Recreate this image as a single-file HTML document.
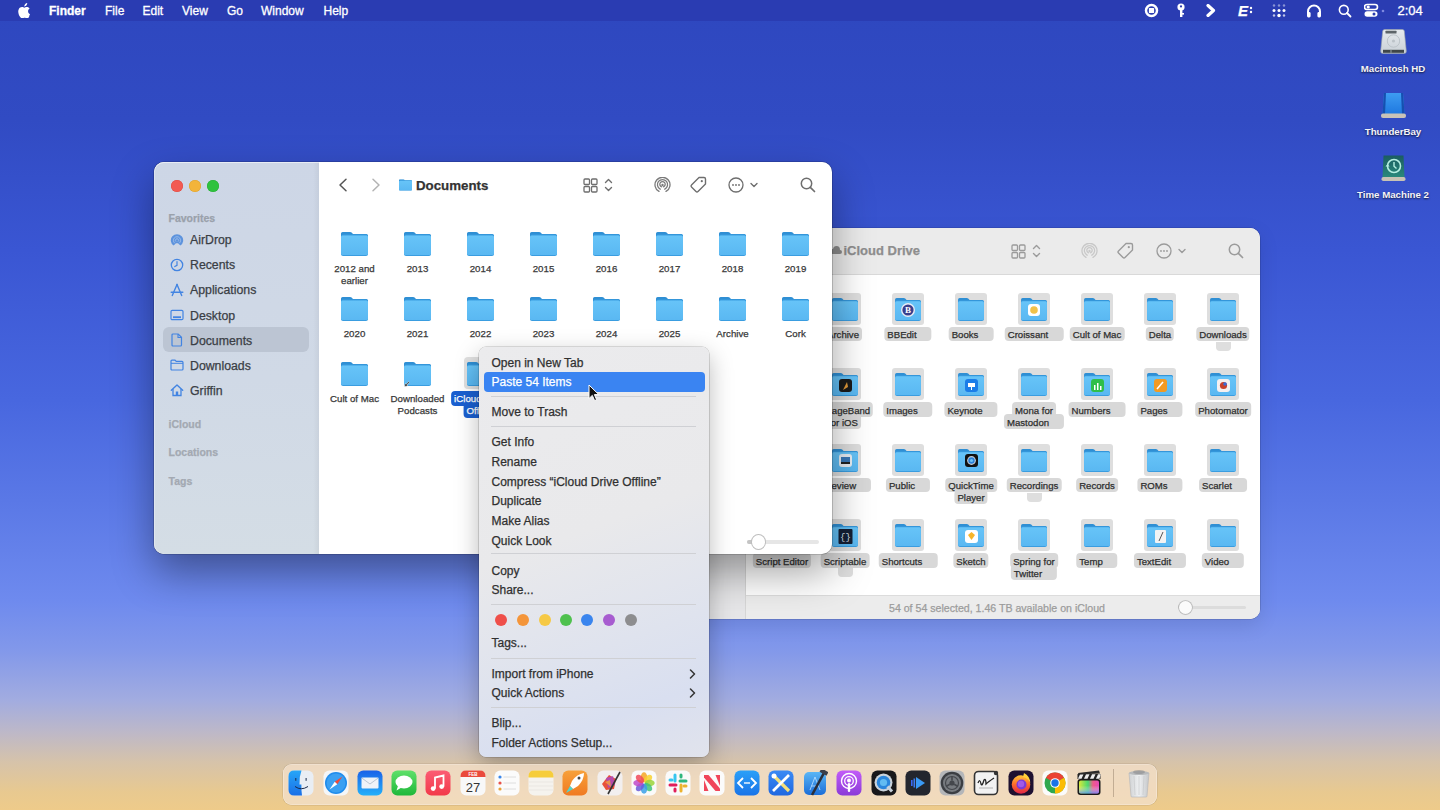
<!DOCTYPE html>
<html><head><meta charset="utf-8">
<style>
*{margin:0;padding:0;box-sizing:border-box}
html,body{width:1440px;height:810px;overflow:hidden}
body{position:relative;font-family:"Liberation Sans",sans-serif;
background:linear-gradient(180deg,#2e47bf 0px,#314bc3 120px,#3a56d3 250px,#4867df 400px,#5a78e6 500px,#6e8aee 600px,#8298ea 650px,#a2ace0 700px,#bdb8c8 732px,#d6c3aa 762px,#e8c990 792px,#eecb8a 810px)}
.a{position:absolute}
svg{display:block}
#menubar{position:absolute;left:0;top:0;width:1440px;height:21px;background:#2a3cb2;color:#fff;font-size:12px}
#menubar span{position:absolute;top:4.7px;line-height:13px;white-space:nowrap;-webkit-text-stroke:.3px #fff}
.dl{position:absolute;color:#f4f4f8;font-weight:bold;font-size:9.7px;line-height:12px;text-shadow:0 1px 2px rgba(0,0,0,.7);white-space:nowrap;text-align:center;width:100px}
.win{position:absolute;overflow:hidden}
.t{position:absolute;white-space:nowrap;-webkit-text-stroke:.25px currentColor}
</style></head>
<body>
<svg width="0" height="0" style="position:absolute">
<defs>
<linearGradient id="fb" x1="0" y1="0" x2="0" y2="1"><stop offset="0" stop-color="#67c4f8"/><stop offset="1" stop-color="#5ab8f2"/></linearGradient>
<symbol id="folder" viewBox="0 0 27 24">
<path d="M1.6 0H9.2Q10 0 10.6 0.6L12 2H25.4Q27 2 27 3.6V8H0V1.6Q0 0 1.6 0Z" fill="#2f8fd4"/>
<path d="M0 4.4Q0 2.6 1.8 2.6H25.2Q27 2.6 27 4.4V22Q27 24 25 24H2Q0 24 0 22Z" fill="#3a9de0"/>
<path d="M0 5Q0 3.4 1.6 3.4H25.4Q27 3.4 27 5V21.6Q27 23 25.6 23H1.4Q0 23 0 21.6Z" fill="url(#fb)"/>
</symbol>
</defs>
</svg>
<div id="menubar">
<svg class="a" style="left:18px;top:3px" width="13" height="15" viewBox="0 0 170 200"><path fill="#fff" d="M150.4 172.5c-8.3 12.4-17.1 24.5-30.4 24.7-13.4.3-17.7-7.9-33-7.9-15.3 0-20 7.7-32.8 8.2-13.2.5-23.2-13.2-31.6-25.5C5.5 146.9-7.6 101.7 10 71.4c8.7-15.1 24.3-24.6 41.2-24.9 12.8-.2 25 8.7 32.8 8.7 7.9 0 19.1-10.7 34-9.2 6.2.3 23.8 2.5 35 19-.9.6-20.9 12.3-20.7 36.6.3 29.1 25.5 38.8 25.8 38.9-.3.7-4.1 13.8-13.3 27.3zM111.3 23.5C118.2 15.4 122.8 4.1 121.5-7c-9.9.4-21.9 6.6-29 14.8-6.4 7.300-12 18.900-10.500 30C93 38.7 104.3 31.700 111.300 23.500z" transform="translate(0,8)"/></svg>
<span style="left:49px;font-weight:bold">Finder</span>
<span style="left:105px">File</span>
<span style="left:142.5px">Edit</span>
<span style="left:182px">View</span>
<span style="left:227px">Go</span>
<span style="left:261px">Window</span>
<span style="left:323.5px">Help</span>
<svg class="a" style="left:1144px;top:3px" width="15" height="15" viewBox="0 0 15 15"><circle cx="7.5" cy="7.5" r="5.5" fill="none" stroke="#fff" stroke-width="2.5"/><rect x="4.9" y="4.9" width="5.2" height="5.2" rx=".6" fill="#fff"/></svg>
<svg class="a" style="left:1176px;top:3px" width="10" height="15" viewBox="0 0 10 15"><circle cx="5" cy="4" r="3.6" fill="#fff"/><circle cx="5" cy="3.4" r="1.1" fill="#2a3bae"/><rect x="4" y="6" width="2.4" height="8" fill="#fff"/><rect x="6" y="10" width="2" height="1.6" fill="#fff"/></svg>
<svg class="a" style="left:1206px;top:4px" width="10" height="13" viewBox="0 0 10 13"><path d="M2 1.5L7.5 6.5L2 11.5" fill="none" stroke="#fff" stroke-width="3.2" stroke-linejoin="round" stroke-linecap="round"/></svg>
<div class="t" style="left:1238px;top:2px;font-size:15px;font-weight:bold;font-style:italic;line-height:17px">E</div>
<svg class="a" style="left:1249px;top:6px" width="4" height="10" viewBox="0 0 4 10"><circle cx="2" cy="2" r="1.2" fill="#fff"/><circle cx="2" cy="6" r="1.2" fill="#fff"/></svg>
<svg class="a" style="left:1271px;top:3px" width="16" height="16" viewBox="0 0 16 16"><g fill="#fff"><circle cx="3" cy="2.5" r="1.2" opacity=".45"/><circle cx="8" cy="2.5" r="1.2" opacity=".45"/><circle cx="13" cy="2.5" r="1.2" opacity=".45"/><circle cx="3" cy="7.5" r="1.5"/><circle cx="8" cy="7.5" r="1.5"/><circle cx="13" cy="7.5" r="1.5"/><circle cx="3" cy="12.5" r="1.2" opacity=".7"/><circle cx="8" cy="12.5" r="1.7"/><circle cx="13" cy="12.5" r="1.2" opacity=".7"/></g></svg>
<svg class="a" style="left:1306px;top:3px" width="16" height="15" viewBox="0 0 16 15"><path d="M2 11.5V8.5A6 6 0 0 1 14 8.5V11.5" fill="none" stroke="#fff" stroke-width="2"/><rect x="1" y="9" width="3.6" height="5.5" rx="1.4" fill="#fff"/><rect x="11.4" y="9" width="3.6" height="5.5" rx="1.4" fill="#fff"/></svg>
<svg class="a" style="left:1338px;top:4px" width="14" height="14" viewBox="0 0 14 14"><circle cx="5.8" cy="5.8" r="4.4" fill="none" stroke="#fff" stroke-width="1.6"/><path d="M9 9L12.5 12.5" stroke="#fff" stroke-width="1.8" stroke-linecap="round"/></svg>
<svg class="a" style="left:1364px;top:3px" width="16" height="15" viewBox="0 0 16 15"><rect x="0.5" y="1.5" width="13" height="5" rx="2.5" fill="none" stroke="#fff" stroke-width="1.6"/><circle cx="4.2" cy="4" r="1.6" fill="#fff"/><rect x="0.5" y="8.3" width="13" height="5.4" rx="2.7" fill="#fff"/><circle cx="10" cy="11" r="1.5" fill="#2a3bae"/></svg>
<svg class="a" style="left:1381px;top:9px" width="4" height="4"><circle cx="2" cy="2" r="1.3" fill="#7d88e0"/></svg>
<span style="left:1397.5px;font-size:13px;top:4px">2:04</span>
</div>

<svg class="a" style="left:1380px;top:29px" width="27" height="26" viewBox="0 0 27 26">
<defs><linearGradient id="hd" x1="0" y1="0" x2="0" y2="1"><stop offset="0" stop-color="#e6eaee"/><stop offset="1" stop-color="#c9d0d6"/></linearGradient></defs>
<path d="M4.5 0.5H22.5Q24 0.5 24.3 2L26.3 22Q26.5 24.5 24 24.5H3Q0.5 24.5 0.7 22L2.7 2Q3 0.5 4.5 0.5Z" fill="url(#hd)" stroke="#9aa2a8" stroke-width=".6"/>
<rect x="5.5" y="1.8" width="11" height="2.6" rx=".5" fill="#5d6569"/>
<circle cx="13.5" cy="12" r="6.2" fill="none" stroke="#b9c1c6" stroke-width=".9"/>
<circle cx="13.5" cy="12" r="1.6" fill="#bcc3c8"/>
<rect x="3" y="20.8" width="21" height="3" fill="#3f4649"/>
<rect x="10.5" y="20.8" width="1" height="3" fill="#9aa2a8"/>
</svg>
<div class="dl" style="left:1343px;top:63px">Macintosh HD</div>
<svg class="a" style="left:1380px;top:92px" width="27" height="27" viewBox="0 0 27 27">
<defs><linearGradient id="tb" x1="0" y1="0" x2="0" y2="1"><stop offset="0" stop-color="#3d9cf2"/><stop offset="1" stop-color="#1f78e0"/></linearGradient></defs>
<path d="M4 1H23L24.5 22H2.5Z" fill="url(#tb)"/>
<path d="M4 1H6L5 22H2.5Z" fill="#1550b0"/><path d="M21 1H23L24.5 22H22Z" fill="#1550b0"/>
<rect x="1" y="21.5" width="25" height="4.5" rx="2" fill="#c9c3b8"/>
</svg>
<div class="dl" style="left:1343px;top:126px">ThunderBay</div>
<svg class="a" style="left:1380px;top:155px" width="27" height="27" viewBox="0 0 27 27">
<defs><linearGradient id="tm" x1="0" y1="0" x2="0" y2="1"><stop offset="0" stop-color="#1a5c60"/><stop offset="1" stop-color="#2b8a7c"/></linearGradient></defs>
<path d="M3.5 0.5H23.5L24.5 22.5H2.5Z" fill="url(#tm)"/>
<rect x="1.5" y="22" width="24" height="4" rx="1.8" fill="#c8c2b4"/>
<circle cx="14" cy="11" r="6.5" fill="none" stroke="#b6efe2" stroke-width="1.6"/>
<path d="M14 7V11.2L16.5 13.5" fill="none" stroke="#b6efe2" stroke-width="1.4"/>
<path d="M5.5 11.5L7.6 9L9.6 11.6Z" fill="#b6efe2"/>
</svg>
<div class="dl" style="left:1343px;top:189px">Time Machine 2</div>
<div class="win" style="left:520px;top:228px;width:740px;height:391px;border-radius:10px;background:#fff;box-shadow:0 0 0 .6px rgba(0,0,0,.2),0 6px 20px rgba(0,0,0,.1)"><div class="a" style="left:0;top:0;width:226px;height:391px;background:#e6e6e8;border-right:1px solid #d6d6d6"></div><div class="a" style="left:226px;top:0;width:514px;height:47px;background:#ebebeb;border-bottom:1px solid #d9d9d9"></div><div class="a" style="left:226px;top:367px;width:514px;height:24px;background:#ececec;border-top:1px solid #dcdcdc"></div></div><div class="t" style="left:843.5px;top:242.5px;font-size:13px;line-height:16px;font-weight:bold;color:#8e8e8e">iCloud Drive</div><svg class="a" style="left:830px;top:245px" width="12" height="10" viewBox="0 0 12 10"><path d="M3 9H10Q12 9 12 7Q12 5 10 5Q10 1 6.5 1Q3.5 1 3 4Q0 4 0 6.5Q0 9 3 9Z" fill="#8b8b8b"/></svg><svg class="a" style="left:1010.5px;top:243.5px" width="15" height="15" viewBox="0 0 15 15"><g fill="none" stroke="#9b9b9b" stroke-width="1.3"><rect x="1" y="1" width="5.5" height="5.5" rx="1"/><rect x="8.5" y="1" width="5.5" height="5.5" rx="1"/><rect x="1" y="8.5" width="5.5" height="5.5" rx="1"/><rect x="8.5" y="8.5" width="5.5" height="5.5" rx="1"/></g></svg><svg class="a" style="left:1031.5px;top:243px" width="9" height="16" viewBox="0 0 9 16"><path d="M1.5 5.5L4.5 2.5L7.5 5.5M1.5 10.5L4.5 13.5L7.5 10.5" fill="none" stroke="#9b9b9b" stroke-width="1.4" stroke-linecap="round" stroke-linejoin="round"/></svg><svg class="a" style="left:1080.5px;top:243px" width="17" height="17" viewBox="0 0 17 17"><g fill="none" stroke="#c8c8c8" stroke-width="1.3" stroke-linecap="round"><path d="M5 14.4A7.5 7.5 0 1 1 12 14.4"/><path d="M6.2 12.2A5.1 5.1 0 1 1 10.8 12.2"/><path d="M7.5 9.8A2.7 2.7 0 1 1 9.5 9.8"/></g><circle cx="8.5" cy="8" r="1.2" fill="#c8c8c8"/></svg><svg class="a" style="left:1116px;top:242px" width="18" height="18" viewBox="0 0 18 18"><path d="M10 1.5H15Q16.5 1.5 16.5 3V8L9 15.5Q8 16.5 7 15.5L2.5 11Q1.5 10 2.5 9Z" fill="none" stroke="#9b9b9b" stroke-width="1.4" stroke-linejoin="round"/><circle cx="12.8" cy="5.2" r="1.1" fill="#9b9b9b"/></svg><svg class="a" style="left:1155.5px;top:243px" width="16" height="16" viewBox="0 0 16 16"><circle cx="8" cy="8" r="7" fill="none" stroke="#9b9b9b" stroke-width="1.3"/><circle cx="5" cy="8" r=".9" fill="#9b9b9b"/><circle cx="8" cy="8" r=".9" fill="#9b9b9b"/><circle cx="11" cy="8" r=".9" fill="#9b9b9b"/></svg><svg class="a" style="left:1178px;top:248px" width="8" height="6" viewBox="0 0 8 6"><path d="M1 1.5L4 4.5L7 1.5" fill="none" stroke="#9b9b9b" stroke-width="1.4" stroke-linecap="round" stroke-linejoin="round"/></svg><svg class="a" style="left:1227.5px;top:243px" width="16" height="16" viewBox="0 0 16 16"><circle cx="6.5" cy="6.5" r="5.2" fill="none" stroke="#9b9b9b" stroke-width="1.5"/><path d="M10.3 10.3L14.5 14.5" stroke="#9b9b9b" stroke-width="1.7" stroke-linecap="round"/></svg><div class="a" style="left:829px;top:292.5px;width:32px;height:32px;border-radius:3px;background:#dedede"></div><svg class="a" style="left:832px;top:297.5px" width="26" height="23"><use href="#folder"/></svg><div class="t" style="left:843px;top:326.5px;transform:translateX(-50%);font-size:9.6px;line-height:12px;color:#2e2e2e;background:#d8d8d8;border-radius:4px;padding:2.5px 3px 0 3px;height:14.5px">Archive</div><div class="a" style="left:892px;top:292.5px;width:32px;height:32px;border-radius:3px;background:#dedede"></div><svg class="a" style="left:895px;top:297.5px" width="26" height="23"><use href="#folder"/></svg><svg class="a" style="left:899.5px;top:302.0px" width="17" height="16" viewBox="0 0 17 16"><circle cx="8" cy="8" r="7" fill="#e8ecf5"/><circle cx="8" cy="8" r="5.6" fill="#3a3f8c"/><text x="8" y="11.3" font-size="9" font-weight="bold" fill="#fff" text-anchor="middle" font-family="Liberation Serif">B</text></svg><div class="t" style="left:908px;top:326.5px;transform:translateX(-50%);font-size:9.6px;line-height:12px;color:#2e2e2e;background:#d8d8d8;border-radius:4px;padding:2.5px 15px 0 3px;height:14.5px">BBEdit</div><div class="a" style="left:955px;top:292.5px;width:32px;height:32px;border-radius:3px;background:#dedede"></div><svg class="a" style="left:958px;top:297.5px" width="26" height="23"><use href="#folder"/></svg><div class="t" style="left:971px;top:326.5px;transform:translateX(-50%);font-size:9.6px;line-height:12px;color:#2e2e2e;background:#d8d8d8;border-radius:4px;padding:2.5px 15px 0 3px;height:14.5px">Books</div><div class="a" style="left:1018px;top:292.5px;width:32px;height:32px;border-radius:3px;background:#dedede"></div><svg class="a" style="left:1021px;top:297.5px" width="26" height="23"><use href="#folder"/></svg><svg class="a" style="left:1025.5px;top:302.0px" width="17" height="16" viewBox="0 0 17 16"><rect x="2" y="2" width="12" height="12" rx="3" fill="#fff"/><circle cx="8" cy="8" r="3.8" fill="#f2c24a"/></svg><div class="t" style="left:1034px;top:326.5px;transform:translateX(-50%);font-size:9.6px;line-height:12px;color:#2e2e2e;background:#d8d8d8;border-radius:4px;padding:2.5px 15px 0 3px;height:14.5px">Croissant</div><div class="a" style="left:1081px;top:292.5px;width:32px;height:32px;border-radius:3px;background:#dedede"></div><svg class="a" style="left:1084px;top:297.5px" width="26" height="23"><use href="#folder"/></svg><div class="t" style="left:1097px;top:326.5px;transform:translateX(-50%);font-size:9.6px;line-height:12px;color:#2e2e2e;background:#d8d8d8;border-radius:4px;padding:2.5px 3px 0 3px;height:14.5px">Cult of Mac</div><div class="a" style="left:1144px;top:292.5px;width:32px;height:32px;border-radius:3px;background:#dedede"></div><svg class="a" style="left:1147px;top:297.5px" width="26" height="23"><use href="#folder"/></svg><div class="t" style="left:1160px;top:326.5px;transform:translateX(-50%);font-size:9.6px;line-height:12px;color:#2e2e2e;background:#d8d8d8;border-radius:4px;padding:2.5px 3px 0 3px;height:14.5px">Delta</div><div class="a" style="left:1207px;top:292.5px;width:32px;height:32px;border-radius:3px;background:#dedede"></div><svg class="a" style="left:1210px;top:297.5px" width="26" height="23"><use href="#folder"/></svg><div class="t" style="left:1223px;top:326.5px;transform:translateX(-50%);font-size:9.6px;line-height:12px;color:#2e2e2e;background:#d8d8d8;border-radius:4px;padding:2.5px 3px 0 3px;height:14.5px">Downloads</div><div class="a" style="left:1216px;top:341.5px;width:15px;height:9px;background:#dedede;border-radius:0 0 4px 4px"></div><div class="a" style="left:829px;top:368.1px;width:32px;height:32px;border-radius:3px;background:#dedede"></div><svg class="a" style="left:832px;top:373.1px" width="26" height="23"><use href="#folder"/></svg><svg class="a" style="left:836.5px;top:377.6px" width="17" height="16" viewBox="0 0 17 16"><rect x="2" y="1" width="13" height="13" rx="3" fill="#1a1a1a"/><path d="M6 12L10 4L11 9Z" fill="#e39a3a"/></svg><div class="t" style="left:843px;top:414.1px;transform:translateX(-50%);font-size:9.6px;line-height:12px;color:#2e2e2e;background:#d8d8d8;border-radius:4px;padding:2.5px 3px 0 3px;height:14.5px">for iOS</div><div class="t" style="left:843px;top:402.1px;transform:translateX(-50%);font-size:9.6px;line-height:12px;color:#2e2e2e;background:#d8d8d8;border-radius:4px;padding:2.5px 3px 0 3px;height:14.5px">GarageBand</div><div class="a" style="left:892px;top:368.1px;width:32px;height:32px;border-radius:3px;background:#dedede"></div><svg class="a" style="left:895px;top:373.1px" width="26" height="23"><use href="#folder"/></svg><div class="t" style="left:908px;top:402.1px;transform:translateX(-50%);font-size:9.6px;line-height:12px;color:#2e2e2e;background:#d8d8d8;border-radius:4px;padding:2.5px 15px 0 3px;height:14.5px">Images</div><div class="a" style="left:955px;top:368.1px;width:32px;height:32px;border-radius:3px;background:#dedede"></div><svg class="a" style="left:958px;top:373.1px" width="26" height="23"><use href="#folder"/></svg><svg class="a" style="left:962.5px;top:377.6px" width="17" height="16" viewBox="0 0 17 16"><rect x="2" y="1" width="13" height="13" rx="3" fill="#1b7de8"/><rect x="5" y="5" width="7" height="4" fill="#fff"/><rect x="8" y="9" width="1" height="3" fill="#fff"/></svg><div class="t" style="left:971px;top:402.1px;transform:translateX(-50%);font-size:9.6px;line-height:12px;color:#2e2e2e;background:#d8d8d8;border-radius:4px;padding:2.5px 15px 0 3px;height:14.5px">Keynote</div><div class="a" style="left:1018px;top:368.1px;width:32px;height:32px;border-radius:3px;background:#dedede"></div><svg class="a" style="left:1021px;top:373.1px" width="26" height="23"><use href="#folder"/></svg><div class="t" style="left:1034px;top:414.1px;transform:translateX(-50%);font-size:9.6px;line-height:12px;color:#2e2e2e;background:#d8d8d8;border-radius:4px;padding:2.5px 15px 0 3px;height:14.5px">Mastodon</div><div class="t" style="left:1034px;top:402.1px;transform:translateX(-50%);font-size:9.6px;line-height:12px;color:#2e2e2e;background:#d8d8d8;border-radius:4px;padding:2.5px 3px 0 3px;height:14.5px">Mona for</div><div class="a" style="left:1081px;top:368.1px;width:32px;height:32px;border-radius:3px;background:#dedede"></div><svg class="a" style="left:1084px;top:373.1px" width="26" height="23"><use href="#folder"/></svg><svg class="a" style="left:1088.5px;top:377.6px" width="17" height="16" viewBox="0 0 17 16"><rect x="2" y="1" width="13" height="13" rx="3" fill="#2fbf4a"/><rect x="5" y="7" width="1.5" height="5" fill="#fff"/><rect x="8" y="5" width="1.5" height="7" fill="#fff"/><rect x="11" y="8" width="1.5" height="4" fill="#fff"/></svg><div class="t" style="left:1097px;top:402.1px;transform:translateX(-50%);font-size:9.6px;line-height:12px;color:#2e2e2e;background:#d8d8d8;border-radius:4px;padding:2.5px 15px 0 3px;height:14.5px">Numbers</div><div class="a" style="left:1144px;top:368.1px;width:32px;height:32px;border-radius:3px;background:#dedede"></div><svg class="a" style="left:1147px;top:373.1px" width="26" height="23"><use href="#folder"/></svg><svg class="a" style="left:1151.5px;top:377.6px" width="17" height="16" viewBox="0 0 17 16"><rect x="2" y="1" width="13" height="13" rx="3" fill="#f39a22"/><path d="M5 11L11 4" stroke="#fff" stroke-width="1.6"/></svg><div class="t" style="left:1160px;top:402.1px;transform:translateX(-50%);font-size:9.6px;line-height:12px;color:#2e2e2e;background:#d8d8d8;border-radius:4px;padding:2.5px 15px 0 3px;height:14.5px">Pages</div><div class="a" style="left:1207px;top:368.1px;width:32px;height:32px;border-radius:3px;background:#dedede"></div><svg class="a" style="left:1210px;top:373.1px" width="26" height="23"><use href="#folder"/></svg><svg class="a" style="left:1214.5px;top:377.6px" width="17" height="16" viewBox="0 0 17 16"><rect x="2" y="1" width="13" height="13" rx="3" fill="#f5f0f0"/><circle cx="8.5" cy="7.5" r="3.6" fill="#c8402a"/><circle cx="10" cy="6" r="1.8" fill="#3a6ad8"/></svg><div class="t" style="left:1223px;top:402.1px;transform:translateX(-50%);font-size:9.6px;line-height:12px;color:#2e2e2e;background:#d8d8d8;border-radius:4px;padding:2.5px 3px 0 3px;height:14.5px">Photomator</div><div class="a" style="left:829px;top:443.7px;width:32px;height:32px;border-radius:3px;background:#dedede"></div><svg class="a" style="left:832px;top:448.7px" width="26" height="23"><use href="#folder"/></svg><svg class="a" style="left:836.5px;top:453.2px" width="17" height="16" viewBox="0 0 17 16"><rect x="2" y="1" width="13" height="13" rx="3" fill="#e8eef5"/><rect x="4" y="4" width="9" height="6" fill="#3a78b8"/><rect x="4" y="9" width="9" height="2" fill="#222"/></svg><div class="t" style="left:845px;top:477.7px;transform:translateX(-50%);font-size:9.6px;line-height:12px;color:#2e2e2e;background:#d8d8d8;border-radius:4px;padding:2.5px 15px 0 3px;height:14.5px">Preview</div><div class="a" style="left:892px;top:443.7px;width:32px;height:32px;border-radius:3px;background:#dedede"></div><svg class="a" style="left:895px;top:448.7px" width="26" height="23"><use href="#folder"/></svg><div class="t" style="left:908px;top:477.7px;transform:translateX(-50%);font-size:9.6px;line-height:12px;color:#2e2e2e;background:#d8d8d8;border-radius:4px;padding:2.5px 15px 0 3px;height:14.5px">Public</div><div class="a" style="left:955px;top:443.7px;width:32px;height:32px;border-radius:3px;background:#dedede"></div><svg class="a" style="left:958px;top:448.7px" width="26" height="23"><use href="#folder"/></svg><svg class="a" style="left:962.5px;top:453.2px" width="17" height="16" viewBox="0 0 17 16"><rect x="2" y="1" width="13" height="13" rx="3" fill="#111"/><circle cx="8.5" cy="7.5" r="4.4" fill="#c4ccd4"/><circle cx="8.5" cy="7.5" r="3.2" fill="#2a80d8"/><circle cx="8.5" cy="7.5" r="1.6" fill="#6cc0f4"/></svg><div class="t" style="left:971px;top:489.7px;transform:translateX(-50%);font-size:9.6px;line-height:12px;color:#2e2e2e;background:#d8d8d8;border-radius:4px;padding:2.5px 3px 0 3px;height:14.5px">Player</div><div class="t" style="left:971px;top:477.7px;transform:translateX(-50%);font-size:9.6px;line-height:12px;color:#2e2e2e;background:#d8d8d8;border-radius:4px;padding:2.5px 3px 0 3px;height:14.5px">QuickTime</div><div class="a" style="left:1018px;top:443.7px;width:32px;height:32px;border-radius:3px;background:#dedede"></div><svg class="a" style="left:1021px;top:448.7px" width="26" height="23"><use href="#folder"/></svg><div class="t" style="left:1034px;top:477.7px;transform:translateX(-50%);font-size:9.6px;line-height:12px;color:#2e2e2e;background:#d8d8d8;border-radius:4px;padding:2.5px 3px 0 3px;height:14.5px">Recordings</div><div class="a" style="left:1027px;top:492.7px;width:15px;height:9px;background:#dedede;border-radius:0 0 4px 4px"></div><div class="a" style="left:1081px;top:443.7px;width:32px;height:32px;border-radius:3px;background:#dedede"></div><svg class="a" style="left:1084px;top:448.7px" width="26" height="23"><use href="#folder"/></svg><div class="t" style="left:1097px;top:477.7px;transform:translateX(-50%);font-size:9.6px;line-height:12px;color:#2e2e2e;background:#d8d8d8;border-radius:4px;padding:2.5px 3px 0 3px;height:14.5px">Records</div><div class="a" style="left:1144px;top:443.7px;width:32px;height:32px;border-radius:3px;background:#dedede"></div><svg class="a" style="left:1147px;top:448.7px" width="26" height="23"><use href="#folder"/></svg><div class="t" style="left:1160px;top:477.7px;transform:translateX(-50%);font-size:9.6px;line-height:12px;color:#2e2e2e;background:#d8d8d8;border-radius:4px;padding:2.5px 15px 0 3px;height:14.5px">ROMs</div><div class="a" style="left:1207px;top:443.7px;width:32px;height:32px;border-radius:3px;background:#dedede"></div><svg class="a" style="left:1210px;top:448.7px" width="26" height="23"><use href="#folder"/></svg><div class="t" style="left:1223px;top:477.7px;transform:translateX(-50%);font-size:9.6px;line-height:12px;color:#2e2e2e;background:#d8d8d8;border-radius:4px;padding:2.5px 15px 0 3px;height:14.5px">Scarlet</div><div class="a" style="left:766px;top:519.3px;width:32px;height:32px;border-radius:3px;background:#dedede"></div><svg class="a" style="left:769px;top:524.3px" width="26" height="23"><use href="#folder"/></svg><div class="t" style="left:782px;top:553.3px;transform:translateX(-50%);font-size:9.6px;line-height:12px;color:#2e2e2e;background:#d8d8d8;border-radius:4px;padding:2.5px 3px 0 3px;height:14.5px">Script Editor</div><div class="a" style="left:829px;top:519.3px;width:32px;height:32px;border-radius:3px;background:#dedede"></div><svg class="a" style="left:832px;top:524.3px" width="26" height="23"><use href="#folder"/></svg><svg class="a" style="left:836.5px;top:528.8px" width="17" height="16" viewBox="0 0 17 16"><rect x="1.5" y="0" width="14" height="15" rx="1" fill="#142036"/><text x="8.5" y="11" font-size="9" fill="#dfe6f0" text-anchor="middle" font-family="Liberation Mono">{}</text></svg><div class="t" style="left:845px;top:553.3px;transform:translateX(-50%);font-size:9.6px;line-height:12px;color:#2e2e2e;background:#d8d8d8;border-radius:4px;padding:2.5px 3px 0 3px;height:14.5px">Scriptable</div><div class="a" style="left:838px;top:568.3px;width:15px;height:9px;background:#dedede;border-radius:0 0 4px 4px"></div><div class="a" style="left:892px;top:519.3px;width:32px;height:32px;border-radius:3px;background:#dedede"></div><svg class="a" style="left:895px;top:524.3px" width="26" height="23"><use href="#folder"/></svg><div class="t" style="left:908px;top:553.3px;transform:translateX(-50%);font-size:9.6px;line-height:12px;color:#2e2e2e;background:#d8d8d8;border-radius:4px;padding:2.5px 15px 0 3px;height:14.5px">Shortcuts</div><div class="a" style="left:955px;top:519.3px;width:32px;height:32px;border-radius:3px;background:#dedede"></div><svg class="a" style="left:958px;top:524.3px" width="26" height="23"><use href="#folder"/></svg><svg class="a" style="left:962.5px;top:528.8px" width="17" height="16" viewBox="0 0 17 16"><rect x="2" y="1" width="13" height="13" rx="3" fill="#fff"/><path d="M5 6L8.5 3L12 6L8.5 11Z" fill="#f7b52a"/></svg><div class="t" style="left:971px;top:553.3px;transform:translateX(-50%);font-size:9.6px;line-height:12px;color:#2e2e2e;background:#d8d8d8;border-radius:4px;padding:2.5px 3px 0 3px;height:14.5px">Sketch</div><div class="a" style="left:1018px;top:519.3px;width:32px;height:32px;border-radius:3px;background:#dedede"></div><svg class="a" style="left:1021px;top:524.3px" width="26" height="23"><use href="#folder"/></svg><div class="t" style="left:1034px;top:565.3px;transform:translateX(-50%);font-size:9.6px;line-height:12px;color:#2e2e2e;background:#d8d8d8;border-radius:4px;padding:2.5px 15px 0 3px;height:14.5px">Twitter</div><div class="t" style="left:1034px;top:553.3px;transform:translateX(-50%);font-size:9.6px;line-height:12px;color:#2e2e2e;background:#d8d8d8;border-radius:4px;padding:2.5px 3px 0 3px;height:14.5px">Spring for</div><div class="a" style="left:1081px;top:519.3px;width:32px;height:32px;border-radius:3px;background:#dedede"></div><svg class="a" style="left:1084px;top:524.3px" width="26" height="23"><use href="#folder"/></svg><div class="t" style="left:1097px;top:553.3px;transform:translateX(-50%);font-size:9.6px;line-height:12px;color:#2e2e2e;background:#d8d8d8;border-radius:4px;padding:2.5px 15px 0 3px;height:14.5px">Temp</div><div class="a" style="left:1144px;top:519.3px;width:32px;height:32px;border-radius:3px;background:#dedede"></div><svg class="a" style="left:1147px;top:524.3px" width="26" height="23"><use href="#folder"/></svg><svg class="a" style="left:1151.5px;top:528.8px" width="17" height="16" viewBox="0 0 17 16"><rect x="3" y="1" width="11" height="13" rx="1" fill="#f3f3f3"/><path d="M7 12L11 3" stroke="#555" stroke-width="1"/></svg><div class="t" style="left:1160px;top:553.3px;transform:translateX(-50%);font-size:9.6px;line-height:12px;color:#2e2e2e;background:#d8d8d8;border-radius:4px;padding:2.5px 15px 0 3px;height:14.5px">TextEdit</div><div class="a" style="left:1207px;top:519.3px;width:32px;height:32px;border-radius:3px;background:#dedede"></div><svg class="a" style="left:1210px;top:524.3px" width="26" height="23"><use href="#folder"/></svg><div class="t" style="left:1223px;top:553.3px;transform:translateX(-50%);font-size:9.6px;line-height:12px;color:#2e2e2e;background:#d8d8d8;border-radius:4px;padding:2.5px 15px 0 3px;height:14.5px">Video</div><div class="t" style="left:889px;top:601.5px;font-size:10.6px;line-height:12px;color:#9c9c9c">54 of 54 selected, 1.46 TB available on iCloud</div><div class="a" style="left:1178px;top:605.5px;width:68px;height:3px;border-radius:2px;background:#dcdcdc"></div><div class="a" style="left:1178px;top:605px;width:6px;height:4px;border-radius:2px;background:#bdbdbd"></div><div class="a" style="left:1178.5px;top:600.5px;width:13px;height:13px;border-radius:50%;background:#fbfbfb;box-shadow:0 0 0 .8px #b9b9b9,0 .5px 1px rgba(0,0,0,.2)"></div><div class="win" style="left:154px;top:162px;width:678px;height:392px;border-radius:10px;background:#fff;box-shadow:0 0 0 .6px rgba(0,0,0,.28),0 18px 40px rgba(0,0,0,.38)"><div class="a" style="left:0;top:0;width:164.8px;height:392px;background:linear-gradient(180deg,#cdd6e6,#d0d9e6 55%,#d4dde5)"></div><div class="a" style="left:159px;top:0;width:5.8px;height:392px;background:linear-gradient(90deg,rgba(0,0,0,0),rgba(0,0,0,.045))"></div><div class="a" style="left:0;top:0;width:678px;height:392px;border-radius:10px;box-shadow:inset 0 1px 0 rgba(255,255,255,.55),inset 1px 0 0 rgba(255,255,255,.3)"></div></div><div class="a" style="left:171.3px;top:179.6px;width:12px;height:12px;border-radius:50%;background:#f25a52;box-shadow:inset 0 0 0 .5px #df4a43"></div><div class="a" style="left:189.3px;top:179.6px;width:12px;height:12px;border-radius:50%;background:#f3b43a;box-shadow:inset 0 0 0 .5px #dea32e"></div><div class="a" style="left:207.4px;top:179.6px;width:12px;height:12px;border-radius:50%;background:#2fc23e;box-shadow:inset 0 0 0 .5px #27ad35"></div><div class="t" style="left:168.5px;top:212px;font-size:10.5px;line-height:12px;font-weight:bold;color:#9aa1ab">Favorites</div><div class="a" style="left:163px;top:326.5px;width:145.5px;height:25px;border-radius:6px;background:#bcc5d3"></div><div class="t" style="left:190px;top:233px;font-size:12.3px;line-height:14px;color:#3a3e45">AirDrop</div><div class="t" style="left:190px;top:258px;font-size:12.3px;line-height:14px;color:#3a3e45">Recents</div><div class="t" style="left:190px;top:283px;font-size:12.3px;line-height:14px;color:#3a3e45">Applications</div><div class="t" style="left:190px;top:308.5px;font-size:12.3px;line-height:14px;color:#3a3e45">Desktop</div><div class="t" style="left:190px;top:333.5px;font-size:12.3px;line-height:14px;color:#3a3e45">Documents</div><div class="t" style="left:190px;top:358.5px;font-size:12.3px;line-height:14px;color:#3a3e45">Downloads</div><div class="t" style="left:190px;top:383.5px;font-size:12.3px;line-height:14px;color:#3a3e45">Griffin</div><svg class="a" style="left:170px;top:232.5px" width="14" height="14" viewBox="0 0 14 14"><path d="M3.6 12.6A6.2 6.2 0 1 1 10.4 12.6L8 10.3H6Z" fill="#5d93dd"/><g fill="none" stroke="#a7c4ec" stroke-width=".8"><path d="M4.8 10.2A3.6 3.6 0 1 1 9.2 10.2"/><path d="M6 8.6A1.6 1.6 0 1 1 8 8.6"/></g></svg><svg class="a" style="left:170px;top:257.5px" width="14" height="14" viewBox="0 0 14 14"><circle cx="7" cy="7" r="5.7" fill="none" stroke="#4284e2" stroke-width="1.3"/><path d="M7 3.5V7.3L4.8 8.6" fill="none" stroke="#4284e2" stroke-width="1.2" stroke-linecap="round"/></svg><svg class="a" style="left:170px;top:282.5px" width="14" height="14" viewBox="0 0 14 14"><g stroke="#4284e2" stroke-width="1.4" stroke-linecap="round" fill="none"><path d="M7 1.5L2.3 12.5"/><path d="M7 1.5L11.7 12.5"/><path d="M1.2 9.3H12.8"/></g></svg><svg class="a" style="left:170px;top:308.0px" width="14" height="14" viewBox="0 0 14 14"><rect x="1" y="2.3" width="12" height="9.4" rx="1.2" fill="none" stroke="#4284e2" stroke-width="1.2"/><rect x="3" y="8.3" width="8" height="1.8" fill="#4284e2"/></svg><svg class="a" style="left:170px;top:333.0px" width="14" height="14" viewBox="0 0 14 14"><path d="M3 1H8.2L11.5 4.3V12Q11.5 13 10.5 13H3Q2 13 2 12V2Q2 1 3 1Z" fill="none" stroke="#4284e2" stroke-width="1.2"/><path d="M8 1V4.5H11.5" fill="none" stroke="#4284e2" stroke-width="1.1"/></svg><svg class="a" style="left:170px;top:358.0px" width="14" height="14" viewBox="0 0 14 14"><path d="M1 3.2Q1 2.2 2 2.2H5L6.3 3.4H12Q13 3.4 13 4.4V11Q13 12 12 12H2Q1 12 1 11Z" fill="none" stroke="#4284e2" stroke-width="1.2"/><path d="M1 5.3H13" stroke="#4284e2" stroke-width="1"/></svg><svg class="a" style="left:170px;top:383.0px" width="14" height="14" viewBox="0 0 14 14"><path d="M1.3 7.3L7 2L12.7 7.3" fill="none" stroke="#4284e2" stroke-width="1.4" stroke-linecap="round" stroke-linejoin="round"/><path d="M3 6V12.5H11V6" fill="none" stroke="#4284e2" stroke-width="1.3"/><rect x="5.8" y="8.5" width="2.4" height="4" fill="#4284e2"/></svg><div class="t" style="left:168.5px;top:417.5px;font-size:10.5px;line-height:12px;font-weight:bold;color:#a3a9b2">iCloud</div><div class="t" style="left:168.5px;top:446.0px;font-size:10.5px;line-height:12px;font-weight:bold;color:#a3a9b2">Locations</div><div class="t" style="left:168.5px;top:475.0px;font-size:10.5px;line-height:12px;font-weight:bold;color:#a3a9b2">Tags</div><svg class="a" style="left:338px;top:178px" width="10" height="14" viewBox="0 0 10 14"><path d="M8 1.2L2 7L8 12.8" fill="none" stroke="#555" stroke-width="1.5" stroke-linecap="round" stroke-linejoin="round"/></svg><svg class="a" style="left:371px;top:178px" width="10" height="14" viewBox="0 0 10 14"><path d="M2 1.2L8 7L2 12.8" fill="none" stroke="#b3b3b3" stroke-width="1.5" stroke-linecap="round" stroke-linejoin="round"/></svg><svg class="a" style="left:398.5px;top:179.4px" width="13" height="12" viewBox="0 0 27 24"><use href="#folder"/></svg><div class="t" style="left:416px;top:177.5px;font-size:13.3px;line-height:16px;font-weight:bold;color:#333">Documents</div><svg class="a" style="left:582.9px;top:177.5px" width="15" height="15" viewBox="0 0 15 15"><g fill="none" stroke="#6e6e6e" stroke-width="1.3"><rect x="1" y="1" width="5.5" height="5.5" rx="1"/><rect x="8.5" y="1" width="5.5" height="5.5" rx="1"/><rect x="1" y="8.5" width="5.5" height="5.5" rx="1"/><rect x="8.5" y="8.5" width="5.5" height="5.5" rx="1"/></g></svg><svg class="a" style="left:604.0px;top:177px" width="9" height="16" viewBox="0 0 9 16"><path d="M1.5 5.5L4.5 2.5L7.5 5.5M1.5 10.5L4.5 13.5L7.5 10.5" fill="none" stroke="#6e6e6e" stroke-width="1.4" stroke-linecap="round" stroke-linejoin="round"/></svg><svg class="a" style="left:653.5px;top:177px" width="17" height="17" viewBox="0 0 17 17"><g fill="none" stroke="#7a7a7a" stroke-width="1.3" stroke-linecap="round"><path d="M5 14.4A7.5 7.5 0 1 1 12 14.4"/><path d="M6.2 12.2A5.1 5.1 0 1 1 10.8 12.2"/><path d="M7.5 9.8A2.7 2.7 0 1 1 9.5 9.8"/></g><circle cx="8.5" cy="8" r="1.2" fill="#7a7a7a"/></svg><svg class="a" style="left:689px;top:176px" width="18" height="18" viewBox="0 0 18 18"><path d="M10 1.5H15Q16.5 1.5 16.5 3V8L9 15.5Q8 16.5 7 15.5L2.5 11Q1.5 10 2.5 9Z" fill="none" stroke="#6e6e6e" stroke-width="1.4" stroke-linejoin="round"/><circle cx="12.8" cy="5.2" r="1.1" fill="#6e6e6e"/></svg><svg class="a" style="left:728px;top:177px" width="16" height="16" viewBox="0 0 16 16"><circle cx="8" cy="8" r="7" fill="none" stroke="#6e6e6e" stroke-width="1.3"/><circle cx="5" cy="8" r=".9" fill="#6e6e6e"/><circle cx="8" cy="8" r=".9" fill="#6e6e6e"/><circle cx="11" cy="8" r=".9" fill="#6e6e6e"/></svg><svg class="a" style="left:750px;top:182px" width="8" height="6" viewBox="0 0 8 6"><path d="M1 1.5L4 4.5L7 1.5" fill="none" stroke="#6e6e6e" stroke-width="1.4" stroke-linecap="round" stroke-linejoin="round"/></svg><svg class="a" style="left:799.5px;top:177px" width="16" height="16" viewBox="0 0 16 16"><circle cx="6.5" cy="6.5" r="5.2" fill="none" stroke="#6e6e6e" stroke-width="1.5"/><path d="M10.3 10.3L14.5 14.5" stroke="#6e6e6e" stroke-width="1.7" stroke-linecap="round"/></svg><svg class="a" style="left:341.0px;top:232px" width="27" height="24"><use href="#folder"/></svg><div class="t" style="left:354.5px;top:262.5px;transform:translateX(-50%);font-size:9.7px;line-height:12px;color:#383838">2012 and</div><div class="t" style="left:354.5px;top:274.5px;transform:translateX(-50%);font-size:9.7px;line-height:12px;color:#383838">earlier</div><svg class="a" style="left:404.0px;top:232px" width="27" height="24"><use href="#folder"/></svg><div class="t" style="left:417.5px;top:262.5px;transform:translateX(-50%);font-size:9.7px;line-height:12px;color:#383838">2013</div><svg class="a" style="left:467.0px;top:232px" width="27" height="24"><use href="#folder"/></svg><div class="t" style="left:480.5px;top:262.5px;transform:translateX(-50%);font-size:9.7px;line-height:12px;color:#383838">2014</div><svg class="a" style="left:530.0px;top:232px" width="27" height="24"><use href="#folder"/></svg><div class="t" style="left:543.5px;top:262.5px;transform:translateX(-50%);font-size:9.7px;line-height:12px;color:#383838">2015</div><svg class="a" style="left:593.0px;top:232px" width="27" height="24"><use href="#folder"/></svg><div class="t" style="left:606.5px;top:262.5px;transform:translateX(-50%);font-size:9.7px;line-height:12px;color:#383838">2016</div><svg class="a" style="left:656.0px;top:232px" width="27" height="24"><use href="#folder"/></svg><div class="t" style="left:669.5px;top:262.5px;transform:translateX(-50%);font-size:9.7px;line-height:12px;color:#383838">2017</div><svg class="a" style="left:719.0px;top:232px" width="27" height="24"><use href="#folder"/></svg><div class="t" style="left:732.5px;top:262.5px;transform:translateX(-50%);font-size:9.7px;line-height:12px;color:#383838">2018</div><svg class="a" style="left:782.0px;top:232px" width="27" height="24"><use href="#folder"/></svg><div class="t" style="left:795.5px;top:262.5px;transform:translateX(-50%);font-size:9.7px;line-height:12px;color:#383838">2019</div><svg class="a" style="left:341.0px;top:297px" width="27" height="24"><use href="#folder"/></svg><div class="t" style="left:354.5px;top:327.5px;transform:translateX(-50%);font-size:9.7px;line-height:12px;color:#383838">2020</div><svg class="a" style="left:404.0px;top:297px" width="27" height="24"><use href="#folder"/></svg><div class="t" style="left:417.5px;top:327.5px;transform:translateX(-50%);font-size:9.7px;line-height:12px;color:#383838">2021</div><svg class="a" style="left:467.0px;top:297px" width="27" height="24"><use href="#folder"/></svg><div class="t" style="left:480.5px;top:327.5px;transform:translateX(-50%);font-size:9.7px;line-height:12px;color:#383838">2022</div><svg class="a" style="left:530.0px;top:297px" width="27" height="24"><use href="#folder"/></svg><div class="t" style="left:543.5px;top:327.5px;transform:translateX(-50%);font-size:9.7px;line-height:12px;color:#383838">2023</div><svg class="a" style="left:593.0px;top:297px" width="27" height="24"><use href="#folder"/></svg><div class="t" style="left:606.5px;top:327.5px;transform:translateX(-50%);font-size:9.7px;line-height:12px;color:#383838">2024</div><svg class="a" style="left:656.0px;top:297px" width="27" height="24"><use href="#folder"/></svg><div class="t" style="left:669.5px;top:327.5px;transform:translateX(-50%);font-size:9.7px;line-height:12px;color:#383838">2025</div><svg class="a" style="left:719.0px;top:297px" width="27" height="24"><use href="#folder"/></svg><div class="t" style="left:732.5px;top:327.5px;transform:translateX(-50%);font-size:9.7px;line-height:12px;color:#383838">Archive</div><svg class="a" style="left:782.0px;top:297px" width="27" height="24"><use href="#folder"/></svg><div class="t" style="left:795.5px;top:327.5px;transform:translateX(-50%);font-size:9.7px;line-height:12px;color:#383838">Cork</div><svg class="a" style="left:341.0px;top:362px" width="27" height="24"><use href="#folder"/></svg><div class="t" style="left:354.5px;top:392.5px;transform:translateX(-50%);font-size:9.7px;line-height:12px;color:#383838">Cult of Mac</div><svg class="a" style="left:404.0px;top:362px" width="27" height="24"><use href="#folder"/></svg><div class="t" style="left:417.5px;top:392.5px;transform:translateX(-50%);font-size:9.7px;line-height:12px;color:#383838">Downloaded</div><div class="t" style="left:417.5px;top:404.5px;transform:translateX(-50%);font-size:9.7px;line-height:12px;color:#383838">Podcasts</div><svg class="a" style="left:403.5px;top:381px" width="6" height="6" viewBox="0 0 6 6"><path d="M0.5 5.5L1.2 2.5L2.2 3.2L4.8 0.6L5.5 1.3L3 4L3.6 5Z" fill="#222" stroke="#fff" stroke-width=".5"/></svg><div class="a" style="left:464.0px;top:357px;width:33px;height:32px;border-radius:4px;background:#e0e0e0"></div><svg class="a" style="left:467.0px;top:362px" width="27" height="24"><use href="#folder"/></svg><div class="t" style="left:480.5px;top:390.5px;transform:translateX(-50%);font-size:9.7px;line-height:12px;color:#fff;background:#1a5fd0;border-radius:4px;padding:2px 3.5px 1px">iCloud Drive</div><div class="t" style="left:480.5px;top:402.5px;transform:translateX(-50%);font-size:9.7px;line-height:12px;color:#fff;background:#1a5fd0;border-radius:4px;padding:2px 3.5px 1px">Offline</div><div class="a" style="left:747px;top:539.5px;width:72px;height:4px;border-radius:2px;background:#e6e6e6"></div><div class="a" style="left:747px;top:539.5px;width:8px;height:4px;border-radius:2px;background:#c4c4c4"></div><div class="a" style="left:751.5px;top:535px;width:13.5px;height:13.5px;border-radius:50%;background:#fff;box-shadow:0 0 0 .9px #bdbdbd,0 .5px 1px rgba(0,0,0,.2)"></div><div class="a" style="left:478.5px;top:346.5px;width:230px;height:410px;border-radius:7px;background:linear-gradient(160deg,#ebebed 0%,#e9e9eb 45%,#dfe3ee 70%,#d9dff0 85%,#e1e3ec 100%);box-shadow:0 0 0 .6px rgba(0,0,0,.22),0 8px 24px rgba(0,0,0,.28)"></div><div class="a" style="left:483.5px;top:372px;width:221px;height:19.5px;border-radius:4px;background:#3a84f2"></div><div class="t" style="left:491.5px;top:355.7px;font-size:12px;line-height:14px;color:#303030">Open in New Tab</div><div class="t" style="left:491.5px;top:375px;font-size:12px;line-height:14px;color:#fff">Paste 54 Items</div><div class="t" style="left:491.5px;top:404.5px;font-size:12px;line-height:14px;color:#303030">Move to Trash</div><div class="t" style="left:491.5px;top:435px;font-size:12px;line-height:14px;color:#303030">Get Info</div><div class="t" style="left:491.5px;top:454.5px;font-size:12px;line-height:14px;color:#303030">Rename</div><div class="t" style="left:491.5px;top:474.5px;font-size:12px;line-height:14px;color:#303030">Compress “iCloud Drive Offline”</div><div class="t" style="left:491.5px;top:494.2px;font-size:12px;line-height:14px;color:#303030">Duplicate</div><div class="t" style="left:491.5px;top:514px;font-size:12px;line-height:14px;color:#303030">Make Alias</div><div class="t" style="left:491.5px;top:533.8px;font-size:12px;line-height:14px;color:#303030">Quick Look</div><div class="t" style="left:491.5px;top:563.5px;font-size:12px;line-height:14px;color:#303030">Copy</div><div class="t" style="left:491.5px;top:583.2px;font-size:12px;line-height:14px;color:#303030">Share...</div><div class="t" style="left:491.5px;top:636px;font-size:12px;line-height:14px;color:#303030">Tags...</div><div class="t" style="left:491.5px;top:666.7px;font-size:12px;line-height:14px;color:#303030">Import from iPhone</div><div class="t" style="left:491.5px;top:686px;font-size:12px;line-height:14px;color:#303030">Quick Actions</div><div class="t" style="left:491.5px;top:716px;font-size:12px;line-height:14px;color:#303030">Blip...</div><div class="t" style="left:491.5px;top:736px;font-size:12px;line-height:14px;color:#303030">Folder Actions Setup...</div><div class="a" style="left:491px;top:396.0px;width:205px;height:1px;background:#cfd0d4"></div><div class="a" style="left:491px;top:426.0px;width:205px;height:1px;background:#cfd0d4"></div><div class="a" style="left:491px;top:553.0px;width:205px;height:1px;background:#cfd0d4"></div><div class="a" style="left:491px;top:603.8px;width:205px;height:1px;background:#cfd0d4"></div><div class="a" style="left:491px;top:658.0px;width:205px;height:1px;background:#cfd0d4"></div><div class="a" style="left:491px;top:707.0px;width:205px;height:1px;background:#cfd0d4"></div><div class="a" style="left:495.25px;top:614px;width:12px;height:12px;border-radius:50%;background:#ef4f4a"></div><div class="a" style="left:517px;top:614px;width:12px;height:12px;border-radius:50%;background:#f4953a"></div><div class="a" style="left:538.7px;top:614px;width:12px;height:12px;border-radius:50%;background:#f6c945"></div><div class="a" style="left:560px;top:614px;width:12px;height:12px;border-radius:50%;background:#4fc14e"></div><div class="a" style="left:581.4px;top:614px;width:12px;height:12px;border-radius:50%;background:#3a85ee"></div><div class="a" style="left:603px;top:614px;width:12px;height:12px;border-radius:50%;background:#a75cd0"></div><div class="a" style="left:624.9px;top:614px;width:12px;height:12px;border-radius:50%;background:#8d8d8f"></div><svg class="a" style="left:689px;top:668.5px" width="7" height="10" viewBox="0 0 7 10"><path d="M1.5 1L5.5 5L1.5 9" fill="none" stroke="#333" stroke-width="1.5" stroke-linecap="round" stroke-linejoin="round"/></svg><svg class="a" style="left:689px;top:688px" width="7" height="10" viewBox="0 0 7 10"><path d="M1.5 1L5.5 5L1.5 9" fill="none" stroke="#333" stroke-width="1.5" stroke-linecap="round" stroke-linejoin="round"/></svg><svg class="a" style="left:588px;top:384px" width="12" height="18" viewBox="0 0 12 18"><path d="M1 1V14.5L4.3 11.4L6.6 16.6L8.6 15.7L6.4 10.6H10.8Z" fill="#111" stroke="#fff" stroke-width="1" stroke-linejoin="round"/></svg><div class="a" style="left:282.5px;top:763.5px;width:874.5px;height:41px;border-radius:9px;background:rgba(242,222,200,.8);box-shadow:inset 0 0 0 .6px rgba(255,255,255,.45),0 0 0 .5px rgba(120,100,80,.25)"></div><svg class="a" style="left:288.30px;top:770px" width="26" height="26" viewBox="0 0 26 26"><defs><linearGradient id="fnd" x1="0" y1="0" x2="0" y2="1"><stop offset="0" stop-color="#27a6f8"/><stop offset="1" stop-color="#1a6fe6"/></linearGradient></defs><rect x="0.5" y="0.5" width="25" height="25" rx="5.8" fill="#e9eef4"/><path d="M6.3 0.5H13.5Q11 7 11.5 14.5H13.4Q13.2 20 14 25.5H6.3Q0.5 25.5 0.5 19.7V6.3Q0.5 0.5 6.3 0.5Z" fill="url(#fnd)"/><path d="M7 16.5Q13 21 20 16.5" fill="none" stroke="#1a2a4a" stroke-width="1"/><rect x="7.3" y="8" width="1" height="2.8" fill="#1a2a4a"/><rect x="17.6" y="8" width="1" height="2.8" fill="#1a2a4a"/></svg><svg class="a" style="left:322.55px;top:770px" width="26" height="26" viewBox="0 0 26 26"><rect x="0.5" y="0.5" width="25" height="25" rx="5.8" fill="#f4f6f8"/><circle cx="13" cy="13" r="11" fill="#1f8cec"/><circle cx="13" cy="13" r="9.5" fill="#3aa0f2"/><path d="M19.5 6.5L14.3 14.3L11.7 11.7Z" fill="#f04a3a"/><path d="M6.5 19.5L11.7 11.7L14.3 14.3Z" fill="#fff"/></svg><svg class="a" style="left:356.80px;top:770px" width="26" height="26" viewBox="0 0 26 26"><defs><linearGradient id="ml" x1="0" y1="0" x2="0" y2="1"><stop offset="0" stop-color="#1a62e8"/><stop offset="1" stop-color="#24b0fa"/></linearGradient></defs><rect x="0.5" y="0.5" width="25" height="25" rx="5.8" fill="url(#ml)" /><rect x="4.5" y="7.5" width="17" height="11" rx="1" fill="#eef3f8"/><path d="M4.8 8L13 14L21.2 8" fill="none" stroke="#b9c6d4" stroke-width="1"/></svg><svg class="a" style="left:391.05px;top:770px" width="26" height="26" viewBox="0 0 26 26"><defs><linearGradient id="msg" x1="0" y1="0" x2="0" y2="1"><stop offset="0" stop-color="#5fe06a"/><stop offset="1" stop-color="#1fb83a"/></linearGradient></defs><rect x="0.5" y="0.5" width="25" height="25" rx="5.8" fill="url(#msg)" /><ellipse cx="13" cy="12" rx="8.5" ry="6.5" fill="#fff"/><path d="M7 16L5.5 20.5L10.5 17.5Z" fill="#fff"/></svg><svg class="a" style="left:425.30px;top:770px" width="26" height="26" viewBox="0 0 26 26"><defs><linearGradient id="mus" x1="0" y1="0" x2="0" y2="1"><stop offset="0" stop-color="#fb5c74"/><stop offset="1" stop-color="#f23a4a"/></linearGradient></defs><rect x="0.5" y="0.5" width="25" height="25" rx="5.8" fill="url(#mus)" /><path d="M10 18.5V7.5L18.5 5.5V16.5" fill="none" stroke="#fff" stroke-width="1.8"/><circle cx="8.2" cy="18.6" r="2.4" fill="#fff"/><circle cx="16.7" cy="16.6" r="2.4" fill="#fff"/></svg><svg class="a" style="left:459.55px;top:770px" width="26" height="26" viewBox="0 0 26 26"><rect x="0.5" y="0.5" width="25" height="25" rx="5.8" fill="#f8f8f8" /><path d="M6.3 0.5H19.7Q25.5 0.5 25.5 6.3V7H0.5V6.3Q0.5 0.5 6.3 0.5Z" fill="#ea4a3c"/><text x="13" y="5.8" font-size="4.5" font-weight="bold" fill="#fff" text-anchor="middle" font-family="Liberation Sans">FEB</text><text x="13" y="21.5" font-size="13" fill="#333" text-anchor="middle" font-family="Liberation Sans">27</text></svg><svg class="a" style="left:493.80px;top:770px" width="26" height="26" viewBox="0 0 26 26"><rect x="0.5" y="0.5" width="25" height="25" rx="5.8" fill="#fbfbfb" /><circle cx="6" cy="7" r="1.6" fill="#3a86ea"/><circle cx="6" cy="13" r="1.6" fill="#e8524a"/><circle cx="6" cy="19" r="1.6" fill="#e9a23a"/><g stroke="#d8d8d8" stroke-width=".8"><path d="M9.5 7H22"/><path d="M9.5 13H22"/><path d="M9.5 19H22"/></g></svg><svg class="a" style="left:528.05px;top:770px" width="26" height="26" viewBox="0 0 26 26"><rect x="0.5" y="0.5" width="25" height="25" rx="5.8" fill="#f5f3ee" /><path d="M6.3 0.5H19.7Q25.5 0.5 25.5 6.3V7.5H0.5V6.3Q0.5 0.5 6.3 0.5Z" fill="#f6cd3a"/><g stroke="#e2e0da" stroke-width=".6"><path d="M1 12H25"/><path d="M1 16H25"/><path d="M1 20H25"/></g></svg><svg class="a" style="left:562.30px;top:770px" width="26" height="26" viewBox="0 0 26 26"><defs><linearGradient id="rk" x1="0" y1="0" x2="0" y2="1"><stop offset="0" stop-color="#f7a13a"/><stop offset="1" stop-color="#f07a22"/></linearGradient></defs><rect x="0.5" y="0.5" width="25" height="25" rx="5.8" fill="url(#rk)" /><path d="M22 3Q15 4 10 11L8 16L11 19L16 16Q22 10 22 3Z" fill="#fff"/><path d="M8 16L4 23L11 19Z" fill="#4fd6d0"/><circle cx="17" cy="8" r="1.5" fill="#444"/></svg><svg class="a" style="left:596.55px;top:770px" width="26" height="26" viewBox="0 0 26 26"><rect x="0.5" y="0.5" width="25" height="25" rx="5.8" fill="#f2efef" /><path d="M5 14L12 5L19 9L17 19L9 20Z" fill="#e8503a"/><path d="M9 8L16 6L18 15L11 18Z" fill="#a74ac8" opacity=".8"/><path d="M8 12L13 10L14 17Z" fill="#f5a23a" opacity=".8"/><path d="M23 2L11 24" stroke="#333" stroke-width="1.6"/></svg><svg class="a" style="left:630.80px;top:770px" width="26" height="26" viewBox="0 0 26 26"><rect x="0.5" y="0.5" width="25" height="25" rx="5.8" fill="#fafafa" /><ellipse cx="13" cy="7.3" rx="3.2" ry="5" fill="#f6a623" opacity=".85" transform="rotate(0 13 13)"/><ellipse cx="13" cy="7.3" rx="3.2" ry="5" fill="#f8d12e" opacity=".85" transform="rotate(45 13 13)"/><ellipse cx="13" cy="7.3" rx="3.2" ry="5" fill="#9bd43a" opacity=".85" transform="rotate(90 13 13)"/><ellipse cx="13" cy="7.3" rx="3.2" ry="5" fill="#3ec27a" opacity=".85" transform="rotate(135 13 13)"/><ellipse cx="13" cy="7.3" rx="3.2" ry="5" fill="#3aa0e8" opacity=".85" transform="rotate(180 13 13)"/><ellipse cx="13" cy="7.3" rx="3.2" ry="5" fill="#6a5ad8" opacity=".85" transform="rotate(225 13 13)"/><ellipse cx="13" cy="7.3" rx="3.2" ry="5" fill="#c04ac8" opacity=".85" transform="rotate(270 13 13)"/><ellipse cx="13" cy="7.3" rx="3.2" ry="5" fill="#f04a5a" opacity=".85" transform="rotate(315 13 13)"/></svg><svg class="a" style="left:665.05px;top:770px" width="26" height="26" viewBox="0 0 26 26"><rect x="0.5" y="0.5" width="25" height="25" rx="5.8" fill="#fafafa" /><g stroke-width="3" stroke-linecap="round"><path d="M10 5V11" stroke="#36c5f0"/><path d="M5 15H11" stroke="#e01e5a"/><path d="M16 21V15" stroke="#ecb22e"/><path d="M21 11H15" stroke="#2eb67d"/><path d="M5 10H7" stroke="#36c5f0"/><path d="M16 5V7" stroke="#2eb67d"/><path d="M21 16H19" stroke="#ecb22e"/><path d="M10 21V19" stroke="#e01e5a"/></g></svg><svg class="a" style="left:699.30px;top:770px" width="26" height="26" viewBox="0 0 26 26"><rect x="0.5" y="0.5" width="25" height="25" rx="5.8" fill="#fbfbfb" /><path d="M5 6H9L21 20V6" fill="none"/><path d="M5 5H9.5L21 18.5V21H16.5L5 7.5Z" fill="#f0455a"/><path d="M5 10V21H9.5Z" fill="#f0455a"/><path d="M21 5V16L16.5 5Z" fill="#f0455a"/></svg><svg class="a" style="left:733.55px;top:770px" width="26" height="26" viewBox="0 0 26 26"><defs><linearGradient id="tv" x1="0" y1="0" x2="0" y2="1"><stop offset="0" stop-color="#2aa0f8"/><stop offset="1" stop-color="#1a74e8"/></linearGradient></defs><rect x="0.5" y="0.5" width="25" height="25" rx="5.8" fill="url(#tv)" /><path d="M9 8L4 13L9 18M17 8L22 13L17 18" fill="none" stroke="#fff" stroke-width="1.8"/><circle cx="11" cy="13" r=".9" fill="#fff"/><circle cx="13" cy="13" r=".9" fill="#fff"/><circle cx="15" cy="13" r=".9" fill="#fff"/></svg><svg class="a" style="left:767.80px;top:770px" width="26" height="26" viewBox="0 0 26 26"><defs><linearGradient id="tbx" x1="0" y1="0" x2="0" y2="1"><stop offset="0" stop-color="#3a8af5"/><stop offset="1" stop-color="#2068e0"/></linearGradient></defs><rect x="0.5" y="0.5" width="25" height="25" rx="5.8" fill="url(#tbx)" /><path d="M5 5L21 21" stroke="#f5e07a" stroke-width="3.2"/><path d="M21 5L5 21" stroke="#fff" stroke-width="2.6"/><circle cx="6" cy="6" r="2.5" fill="#fff"/></svg><svg class="a" style="left:802.05px;top:770px" width="26" height="26" viewBox="0 0 26 26"><defs><linearGradient id="xc" x1="0" y1="0" x2="0" y2="1"><stop offset="0" stop-color="#5ab6f6"/><stop offset="1" stop-color="#1c6ed8"/></linearGradient></defs><rect x="2" y="2" width="22" height="23" rx="5" fill="url(#xc)"/><path d="M8 20L13 7L18 20M9.5 16H16.5" fill="none" stroke="#bfe2ff" stroke-width=".8"/><path d="M23 1L10 25" stroke="#2a2f3a" stroke-width="2.6"/><rect x="18" y="0" width="8" height="4" fill="#3a3f4a" transform="rotate(30 22 2)"/></svg><svg class="a" style="left:836.30px;top:770px" width="26" height="26" viewBox="0 0 26 26"><defs><linearGradient id="pod" x1="0" y1="0" x2="0" y2="1"><stop offset="0" stop-color="#c25cf8"/><stop offset="1" stop-color="#8a3ad8"/></linearGradient></defs><rect x="0.5" y="0.5" width="25" height="25" rx="5.8" fill="url(#pod)" /><circle cx="13" cy="11" r="7.5" fill="none" stroke="#fff" stroke-width="1.4"/><circle cx="13" cy="11" r="4.3" fill="none" stroke="#fff" stroke-width="1.3"/><circle cx="13" cy="10.5" r="2" fill="#fff"/><rect x="11.8" y="13" width="2.4" height="9" rx="1.2" fill="#fff"/></svg><svg class="a" style="left:870.55px;top:770px" width="26" height="26" viewBox="0 0 26 26"><rect x="0.5" y="0.5" width="25" height="25" rx="5.8" fill="#18181a" /><circle cx="12.5" cy="12.5" r="9" fill="#c9d2da"/><circle cx="12.5" cy="12.5" r="6.8" fill="#2a86dc"/><circle cx="12.5" cy="12.5" r="3.6" fill="#62bcf2"/><path d="M16.5 16.5L21 21.5" stroke="#c9d2da" stroke-width="3"/></svg><svg class="a" style="left:904.80px;top:770px" width="26" height="26" viewBox="0 0 26 26"><rect x="0.5" y="0.5" width="25" height="25" rx="5.8" fill="#23262e" /><path d="M11 7L20 13L11 19Z" fill="#3a9af5"/><rect x="6" y="10" width="1.6" height="6" fill="#3a6af5"/><rect x="8.5" y="8.5" width="1.6" height="9" fill="#3a7af5"/></svg><svg class="a" style="left:939.05px;top:770px" width="26" height="26" viewBox="0 0 26 26"><rect x="0.5" y="0.5" width="25" height="25" rx="5.8" fill="#b4b6b9"/><circle cx="13" cy="13" r="11.3" fill="#3b3e43"/><circle cx="13" cy="13" r="9" fill="#777b80"/><circle cx="13" cy="13" r="6.5" fill="none" stroke="#44474c" stroke-width="1.2"/><circle cx="13" cy="13" r="2.6" fill="#44474c"/><g stroke="#44474c" stroke-width="1.6"><path d="M13 6.5V10.5"/><path d="M7.4 16.2L10.8 14.2"/><path d="M18.6 16.2L15.2 14.2"/></g></svg><svg class="a" style="left:973.30px;top:770px" width="26" height="26" viewBox="0 0 26 26"><rect x="1.5" y="1.5" width="23" height="23" rx="4" fill="#f2f2f2" stroke="#333" stroke-width="1.6"/><path d="M5 13Q7 8 8 14Q9 17 11 10Q13 8 13 14Q15 12 21 8" fill="none" stroke="#222" stroke-width="1.3"/><path d="M6 18H20" stroke="#999" stroke-width=".7"/><circle cx="23" cy="3" r="2.2" fill="#333"/></svg><svg class="a" style="left:1007.55px;top:770px" width="26" height="26" viewBox="0 0 26 26"><defs><linearGradient id="ffx" x1="0" y1="0" x2="0" y2="1"><stop offset="0" stop-color="#ffc53a"/><stop offset=".5" stop-color="#ff6a2a"/><stop offset="1" stop-color="#e0254a"/></linearGradient></defs><rect x="0.5" y="0.5" width="25" height="25" rx="5.8" fill="#1e1030"/><circle cx="13" cy="14.5" r="9.3" fill="url(#ffx)"/><circle cx="13.5" cy="14.5" r="5" fill="#7b3ad8"/><circle cx="13" cy="14" r="3.2" fill="#a05ae8"/><path d="M16 3Q22 6 22.3 13Q20 8 15 7Z" fill="#ffcf3a"/></svg><svg class="a" style="left:1041.80px;top:770px" width="26" height="26" viewBox="0 0 26 26"><rect x="0.5" y="0.5" width="25" height="25" rx="5.8" fill="#fbfbfb" /><circle cx="13" cy="13" r="10.5" fill="#2fa84f"/><path d="M13 13L3.9 7.75A10.5 10.5 0 0 1 22.1 7.75Z" fill="#ea4335"/><path d="M13 13L22.1 7.75A10.5 10.5 0 0 1 13 23.5Z" fill="#fbbc04"/><circle cx="13" cy="13" r="4.8" fill="#fff"/><circle cx="13" cy="13" r="3.7" fill="#1a73e8"/></svg><svg class="a" style="left:1076.05px;top:770px" width="26" height="26" viewBox="0 0 26 26"><defs><linearGradient id="fcp1" x1="0" y1="0" x2="1" y2="0"><stop offset="0" stop-color="#d8e83a"/><stop offset=".45" stop-color="#4ad870"/><stop offset=".7" stop-color="#f05a8a"/><stop offset="1" stop-color="#e84ab8"/></linearGradient><linearGradient id="fcp2" x1="0" y1="0" x2="0" y2="1"><stop offset=".4" stop-color="#fff" stop-opacity="0"/><stop offset="1" stop-color="#5a8af8" stop-opacity=".8"/></linearGradient></defs><rect x="1.5" y="9" width="23" height="16" rx="3" fill="#1a1a1a"/><rect x="3" y="10.5" width="20" height="13" rx="1.8" fill="url(#fcp1)"/><rect x="3" y="10.5" width="20" height="13" rx="1.8" fill="url(#fcp2)"/><rect x="1.5" y="4" width="23" height="5" fill="#222"/><g fill="#eee"><path d="M4 4.2H7.5L5.5 8.8H2Z"/><path d="M10 4.2H13.5L11.5 8.8H8Z"/><path d="M16 4.2H19.5L17.5 8.8H14Z"/><path d="M22 4.2H24.5V5L23.5 8.8H20Z"/></g><path d="M2 3L23 0.5L24 3.5L2.5 4.5Z" fill="#2a2a2a"/></svg><div class="a" style="left:1112.5px;top:769px;width:1px;height:28px;background:rgba(110,90,70,.35)"></div><svg class="a" style="left:1125.5px;top:768px" width="26" height="30" viewBox="0 0 26 30"><defs><linearGradient id="tr" x1="0" y1="0" x2="1" y2="0"><stop offset="0" stop-color="#d0d2d4"/><stop offset=".5" stop-color="#eef0f2"/><stop offset="1" stop-color="#c4c6c8"/></linearGradient></defs><path d="M3 5H23L21 28Q21 29 20 29H6Q5 29 5 28Z" fill="url(#tr)" stroke="#b4b6b8" stroke-width=".6"/><ellipse cx="13" cy="5" rx="10" ry="2" fill="#b8babc"/><ellipse cx="13" cy="4" rx="6" ry="2" fill="#8a8c8e" opacity=".6"/><g stroke="#c2c4c6" stroke-width=".6"><path d="M8 8L9 27"/><path d="M13 8V27"/><path d="M18 8L17 27"/></g></svg></body></html>
